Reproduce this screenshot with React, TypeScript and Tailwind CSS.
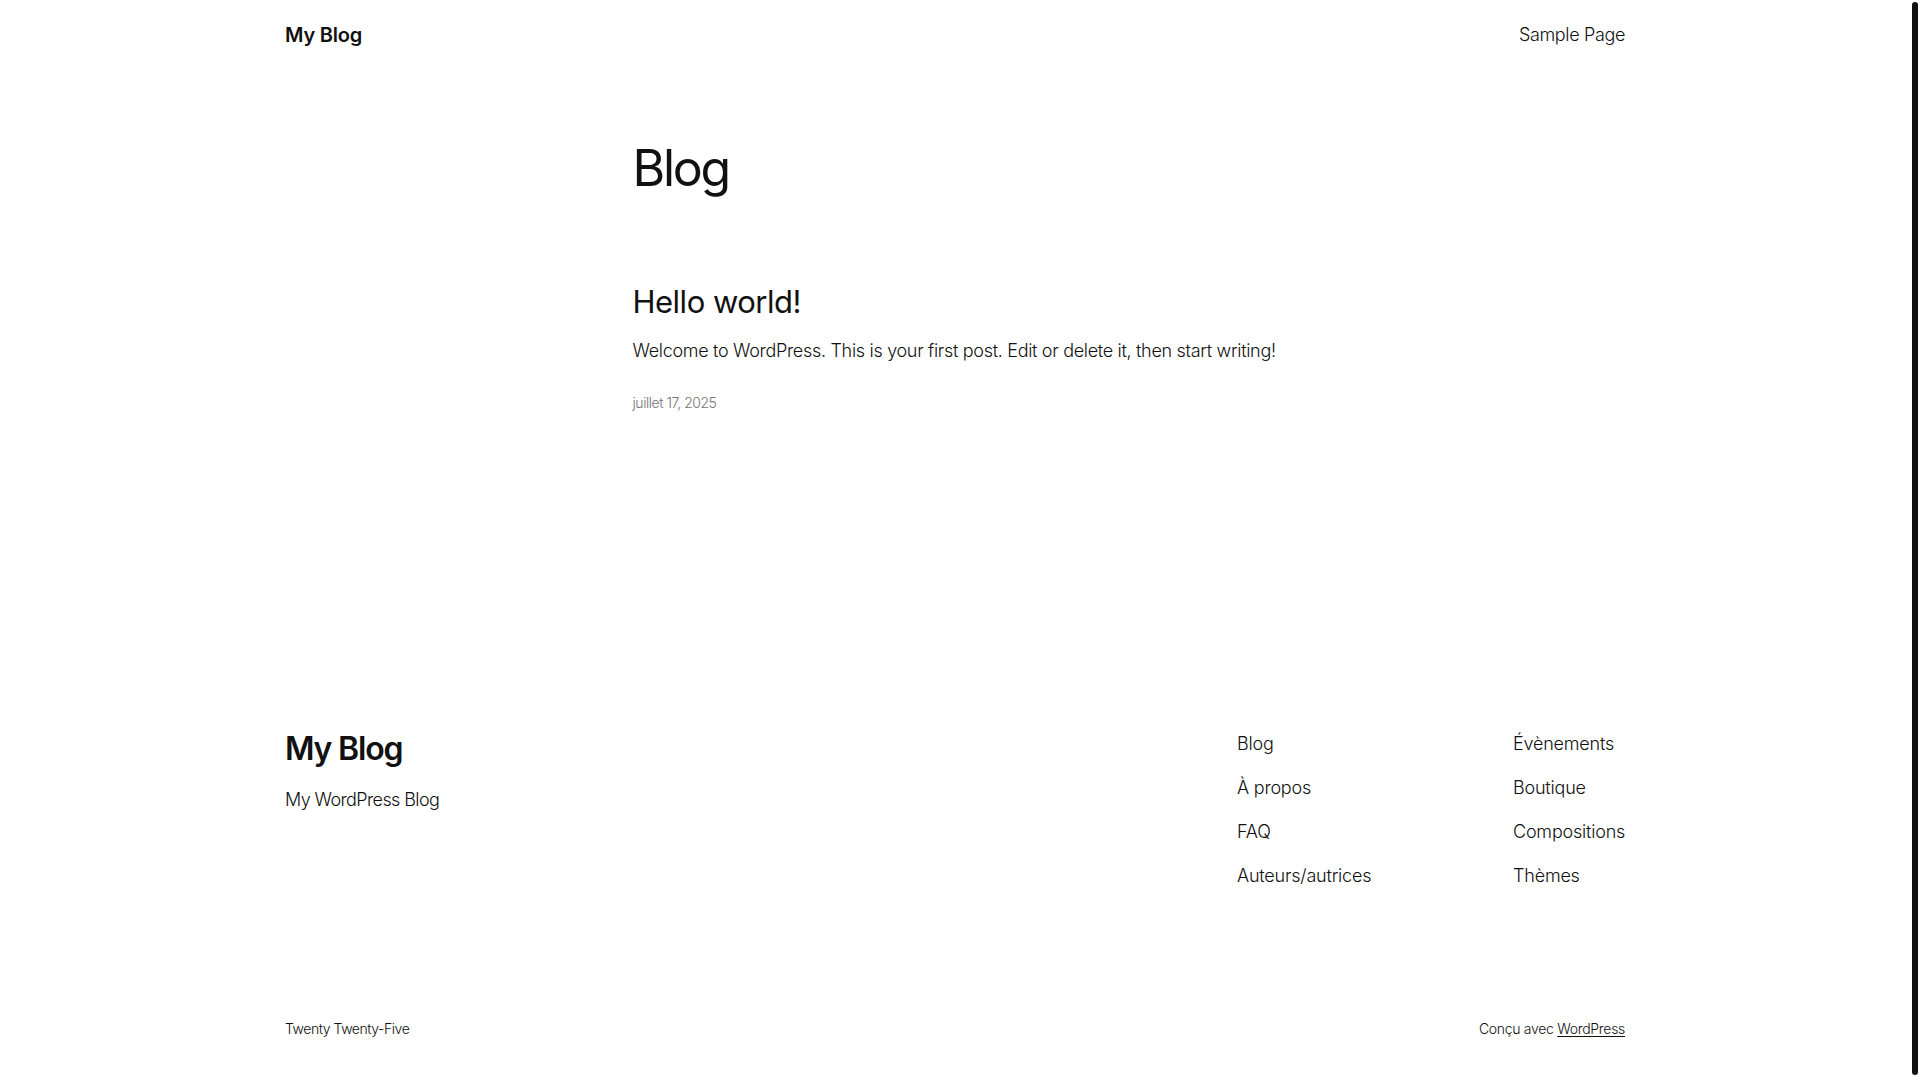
import React from 'react';

const font = { fontFamily: 'Inter, "Noto Sans", sans-serif' };

const navLeft = ['Blog', 'À propos', 'FAQ', 'Auteurs/autrices'];
const navRight = ['Évènements', 'Boutique', 'Compositions', 'Thèmes'];

const App: React.FC = () => {
  return (
    <div className="flex h-screen w-full overflow-hidden bg-white text-[#111111]" style={font}>
      <div className="flex-1 flex flex-col">
        {/* Header */}
        <header className="mx-auto flex h-[68px] w-[1340px] items-center justify-between pt-[2px]">
          <a className="text-[20px] leading-[28px] font-semibold tracking-[-0.2px]">My Blog</a>
          <a className="text-[18px] leading-[28px] font-light tracking-[-0.35px]">Sample Page</a>
        </header>

        {/* Main */}
        <main className="mx-auto w-[645px]">
          <h1 className="mt-[72px] text-[50px] leading-[56px] font-normal tracking-[-2.3px]">Blog</h1>
          <article>
            <h2 className="mt-[87px] text-[31px] leading-[38px] font-normal tracking-[-0.5px]">Hello world!</h2>
            <p className="mt-[16px] whitespace-nowrap text-[18px] leading-[28px] font-light tracking-[-0.31px]">
              Welcome to WordPress. This is your first post. Edit or delete it, then start writing!
            </p>
            <div className="mt-[27px] text-[14px] leading-[22px] font-light tracking-[-0.45px] text-[#747474]">
              juillet 17, 2025
            </div>
          </article>
        </main>

        {/* Footer */}
        <footer className="mx-auto w-[1340px] mt-[316px]">
          <div className="flex justify-between">
            <div>
              <h2 className="text-[32px] leading-[38px] font-semibold tracking-[-1.2px]">My Blog</h2>
              <p className="mt-[18px] text-[18px] leading-[28px] font-light tracking-[-0.6px]">My WordPress Blog</p>
            </div>
            <nav className="flex">
              <ul className="w-[276px] flex flex-col gap-[16px]">
                {navLeft.map((item) => (
                  <li key={item} className="text-[18px] leading-[28px] font-light tracking-[-0.2px]">{item}</li>
                ))}
              </ul>
              <ul className="w-[112px] flex flex-col gap-[16px]">
                {navRight.map((item) => (
                  <li key={item} className="text-[18px] leading-[28px] font-light tracking-[-0.2px] whitespace-nowrap">
                    {item}
                  </li>
                ))}
              </ul>
            </nav>
          </div>
          <div className="mt-[128px] flex justify-between text-[14px] leading-[22px] font-light">
            <span className="tracking-[-0.45px]">Twenty Twenty-Five</span>
            <span className="tracking-[-0.3px]">
              Conçu avec <a className="underline underline-offset-2">WordPress</a>
            </span>
          </div>
        </footer>
      </div>

      {/* Scrollbar */}
      <div className="w-[10px] flex">
        <div className="ml-[2px] mt-[2px] mb-[5px] w-[6px] rounded-[3px] bg-[#111111]" />
      </div>
    </div>
  );
};

export default App;
